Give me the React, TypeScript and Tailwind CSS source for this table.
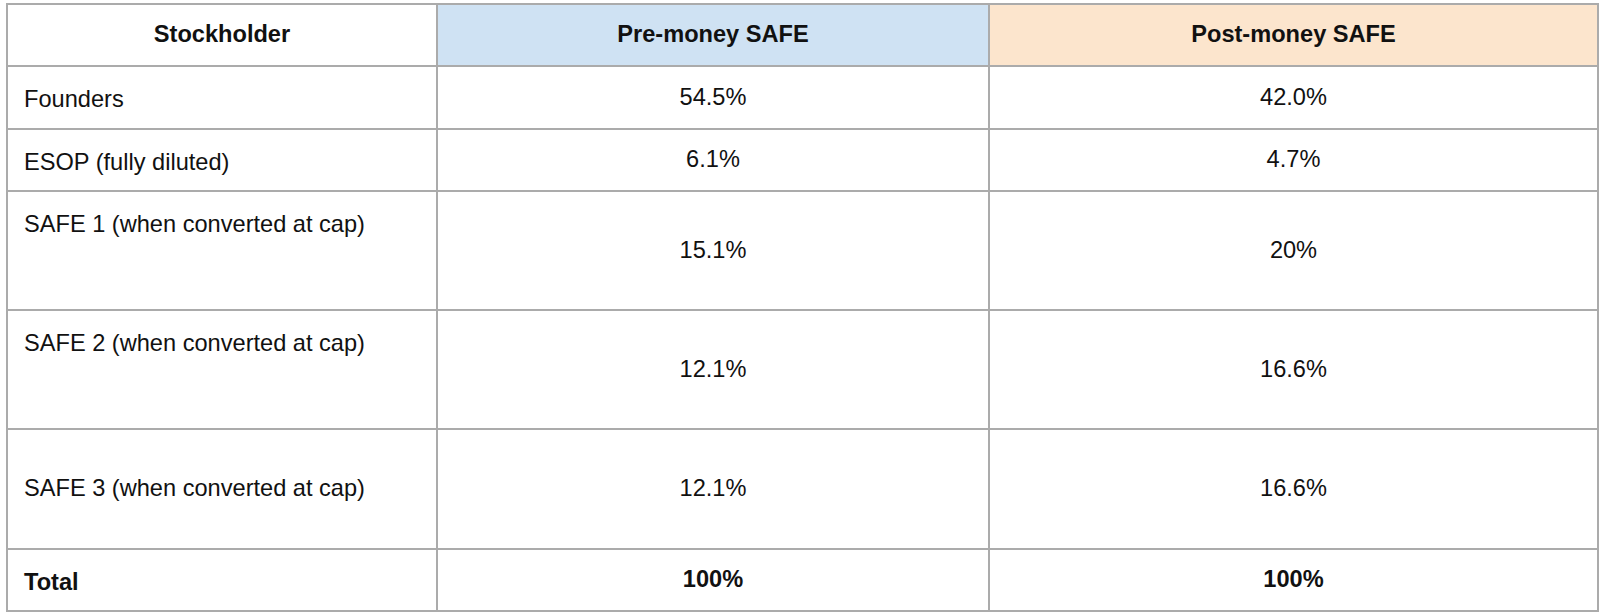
import React from 'react';

// Rows of the cap table comparison
interface Row {
  label: string;
  pre: string;
  post: string;
  height: string;
  labelAlign: 'top' | 'middle';
  bold?: boolean;
}

const rows: Row[] = [
  { label: 'Founders', pre: '54.5%', post: '42.0%', height: 'h-[63px]', labelAlign: 'top' },
  { label: 'ESOP (fully diluted)', pre: '6.1%', post: '4.7%', height: 'h-[62px]', labelAlign: 'top' },
  { label: 'SAFE 1 (when converted at cap)', pre: '15.1%', post: '20%', height: 'h-[119px]', labelAlign: 'top' },
  { label: 'SAFE 2 (when converted at cap)', pre: '12.1%', post: '16.6%', height: 'h-[119px]', labelAlign: 'top' },
  { label: 'SAFE 3 (when converted at cap)', pre: '12.1%', post: '16.6%', height: 'h-[120px]', labelAlign: 'middle' },
  { label: 'Total', pre: '100%', post: '100%', height: 'h-[62px]', labelAlign: 'top', bold: true },
];

const App: React.FC = () => {
  return (
    <div
      className="min-h-screen bg-white pl-[6px] pt-[3px] text-[23.6px] text-[#111]"
      style={{ fontFamily: '"Liberation Sans", Arial, sans-serif' }}
    >
      <table className="table-fixed border-collapse w-[1591px]">
        <colgroup>
          <col className="w-[430px]" />
          <col className="w-[552px]" />
          <col className="w-[609px]" />
        </colgroup>
        <thead>
          <tr className="h-[62px]">
            <th className="border-2 border-[#ababab] bg-white text-center font-bold align-middle">Stockholder</th>
            <th className="border-2 border-[#ababab] bg-[#cfe2f3] text-center font-bold align-middle">Pre-money SAFE</th>
            <th className="border-2 border-[#ababab] bg-[#fce5cd] text-center font-bold align-middle">Post-money SAFE</th>
          </tr>
        </thead>
        <tbody>
          {rows.map((row) => (
            <tr key={row.label} className={row.height}>
              <td
                className={`border-2 border-[#ababab] pl-[16px] ${
                  row.labelAlign === 'top' ? 'align-top pt-[15px]' : 'align-middle'
                } ${row.bold ? 'font-bold' : ''}`}
              >
                {row.label}
              </td>
              <td className={`border-2 border-[#ababab] text-center align-middle ${row.bold ? 'font-bold' : ''}`}>
                {row.pre}
              </td>
              <td className={`border-2 border-[#ababab] text-center align-middle ${row.bold ? 'font-bold' : ''}`}>
                {row.post}
              </td>
            </tr>
          ))}
        </tbody>
      </table>
    </div>
  );
};

export default App;
